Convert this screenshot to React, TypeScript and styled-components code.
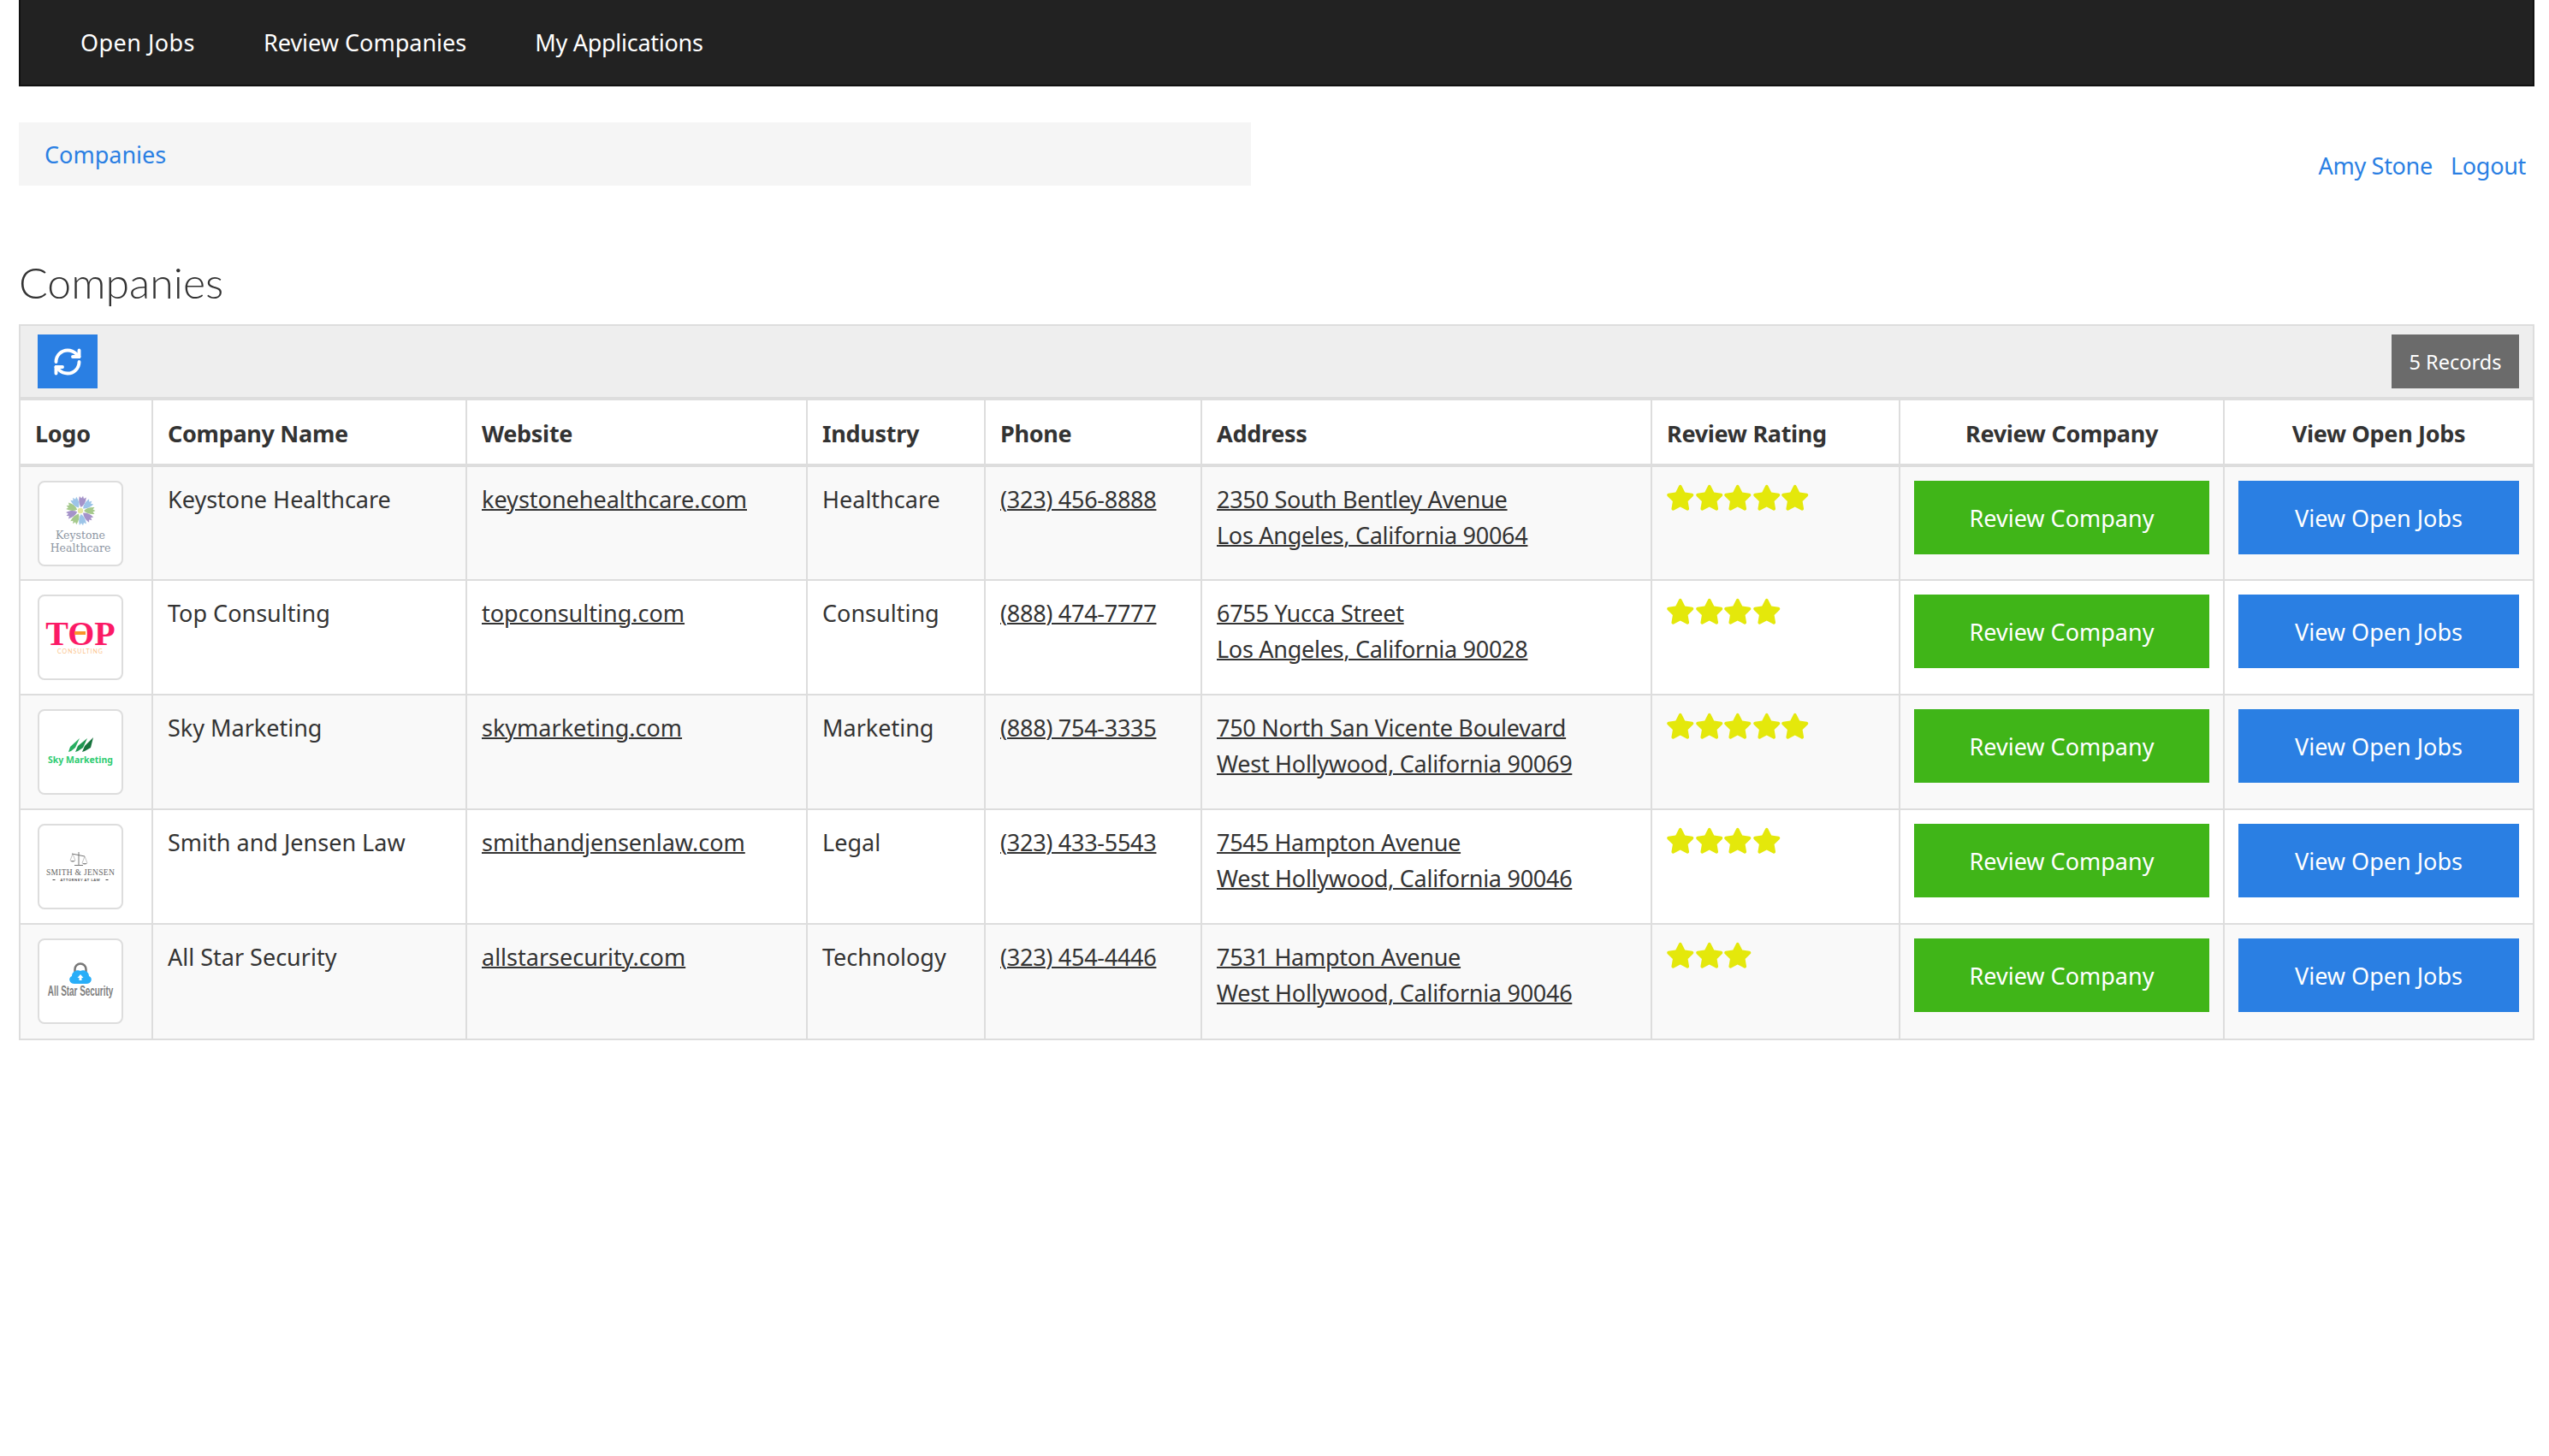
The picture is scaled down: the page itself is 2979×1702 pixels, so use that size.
import * as React from 'react'
import styled, { createGlobalStyle } from 'styled-components'
import { FaStar } from 'react-icons/fa'
import { RefreshCw } from 'lucide-react'

const GlobalStyle = createGlobalStyle`
  html, body {
    margin: 0;
    background: #fff;
    color: #333;
    font-family: "Noto Sans", "Lato", sans-serif;
    font-size: 27px;
    line-height: 42px;
  }
`

type Company = {
  name: string
  logo: React.ReactNode
  website: string
  industry: string
  phone: string
  street: string
  city: string
  rating: number
}

const KeystoneLogo = () => {
  const petals = [
    [10, '#a593c9'], [50, '#9cc4e8'], [90, '#a5c98c'], [130, '#a593c9'], [170, '#9cc4e8'],
    [210, '#a5c98c'], [250, '#a593c9'], [290, '#a5c98c'], [330, '#9cc4e8'],
  ] as const
  return (
    <svg width="96" height="96" viewBox="0 0 96 96">
      {petals.map(([a, c]) => (
        <path key={a} d="M48 29 C45 26 43.500 22 44 16.500 L46.500 18.500 L48 15.500 L49.500 18.500 L52 16.500 C52.500 22 51 26 48 29 Z" fill={c} transform={`rotate(${a} 48 33)`} />
      ))}
      <circle cx="48" cy="33" r="3.200" fill="#e6e8a0" />
      <text x="48" y="66" textAnchor="middle" fontFamily="DejaVu Serif, serif" fontSize="12.500" fill="#8d96a3">Keystone</text>
      <text x="48" y="81" textAnchor="middle" fontFamily="DejaVu Serif, serif" fontSize="12.500" fill="#8d96a3">Healthcare</text>
    </svg>
  )
}

const TopLogo = () => (
  <svg width="96" height="96" viewBox="0 0 96 96">
    <text x="48" y="57" textAnchor="middle" fontFamily="Liberation Serif, serif" fontWeight="700" fontSize="40" fill="#fb1a66">TOP</text>
    <rect x="41" y="41" width="13" height="4" fill="#f9962a" />
    <text x="48" y="67" textAnchor="middle" fontFamily="Lato, sans-serif" fontSize="7" letterSpacing="1" fill="#fcc58c">CONSULTING</text>
  </svg>
)

const SkyLogo = () => (
  <svg width="96" height="96" viewBox="0 0 96 96">
    <path d="M34 48 L36 42 L47 32 L42 43 L37 47 Z" fill="#27ae60" />
    <path d="M42 48 L45 41 L56 32 L51 43 L45 47 Z" fill="#1e9650" />
    <path d="M50 48 L53 41 L63 31 L60 43 L53 47 Z" fill="#17733d" />
    <text x="48" y="61" textAnchor="middle" fontFamily="Noto Sans, sans-serif" fontWeight="700" fontSize="10.500" fill="#2ecc71">Sky Marketing</text>
  </svg>
)

const SmithLogo = () => (
  <svg width="96" height="96" viewBox="0 0 96 96" fill="none">
    <path d="M46 31 L46 46 M41 46.500 L51 46.500 M38 33 L53 36" stroke="#777" strokeWidth="1" />
    <path d="M36 41 L39 33 L42 41 M50 44 L53 36 L56 44" stroke="#999" strokeWidth="0.600" />
    <path d="M36 41 Q39 44 42 41 Z M50 44 Q53 47 56 44 Z" fill="#888" />
    <text x="48" y="58" textAnchor="middle" fontFamily="Liberation Serif, serif" fontSize="9.500" letterSpacing="0.300" fill="#666">SMITH &amp; JENSEN</text>
    <text x="48" y="65" textAnchor="middle" fontFamily="Lato, sans-serif" fontWeight="700" fontSize="4" letterSpacing="0.700" fill="#444">ATTORNEY AT LAW</text>
    <path d="M15.500 63.500 L18.500 63.500 M77.500 63.500 L80.500 63.500" stroke="#444" strokeWidth="1" />
  </svg>
)

const StarLogo = () => (
  <svg width="96" height="96" viewBox="0 0 96 96">
    <path d="M41.500 38 L41.500 34 A6.500 6.500 0 0 1 54.500 34 L54.500 38" fill="none" stroke="#777" strokeWidth="2.500" />
    <path d="M41 51 C35 51 33 44 38 42 C38 36 45 34 48 36 C51 34 58 36 58 42 C63 44 61 51 55 51 Z" fill="#29aef8" />
    <path d="M48 40 L51.500 44 L49.500 44 L49.500 47 L46.500 47 L46.500 44 L44.500 44 Z" fill="#fff" />
    <text transform="translate(48 65) scale(0.62 1)" textAnchor="middle" fontFamily="Liberation Sans, sans-serif" fontWeight="700" fontSize="16" fill="#808080">All Star Security</text>
  </svg>
)

const companies: Company[] = [
  { name: 'Keystone Healthcare', logo: <KeystoneLogo />, website: 'keystonehealthcare.com', industry: 'Healthcare', phone: '(323) 456-8888', street: '2350 South Bentley Avenue', city: 'Los Angeles, California 90064', rating: 5 },
  { name: 'Top Consulting', logo: <TopLogo />, website: 'topconsulting.com', industry: 'Consulting', phone: '(888) 474-7777', street: '6755 Yucca Street', city: 'Los Angeles, California 90028', rating: 4 },
  { name: 'Sky Marketing', logo: <SkyLogo />, website: 'skymarketing.com', industry: 'Marketing', phone: '(888) 754-3335', street: '750 North San Vicente Boulevard', city: 'West Hollywood, California 90069', rating: 5 },
  { name: 'Smith and Jensen Law', logo: <SmithLogo />, website: 'smithandjensenlaw.com', industry: 'Legal', phone: '(323) 433-5543', street: '7545 Hampton Avenue', city: 'West Hollywood, California 90046', rating: 4 },
  { name: 'All Star Security', logo: <StarLogo />, website: 'allstarsecurity.com', industry: 'Technology', phone: '(323) 454-4446', street: '7531 Hampton Avenue', city: 'West Hollywood, California 90046', rating: 3 },
]

const columns = [
  { label: 'Logo', width: 154 },
  { label: 'Company Name', width: 367 },
  { label: 'Website', width: 398 },
  { label: 'Industry', width: 208 },
  { label: 'Phone', width: 253 },
  { label: 'Address', width: 526 },
  { label: 'Review Rating', width: 290 },
  { label: 'Review Company', width: 379, center: true },
  { label: 'View Open Jobs', width: 361, center: true },
]

export default function App() {
  return (
    <Page>
      <GlobalStyle />
      <NavBar>
        <NavLink href="#">Open Jobs</NavLink>
        <NavLink href="#">Review Companies</NavLink>
        <NavLink href="#">My Applications</NavLink>
      </NavBar>
      <TopRow>
        <Breadcrumb><BlueLink href="#">Companies</BlueLink></Breadcrumb>
        <UserLinks>
          <BlueLink href="#">Amy Stone</BlueLink>
          <BlueLink href="#">Logout</BlueLink>
        </UserLinks>
      </TopRow>
      <Heading>Companies</Heading>
      <Panel>
        <Toolbar>
          <RefreshButton aria-label="Refresh"><RefreshCw size={36} strokeWidth={2.6} /></RefreshButton>
          <RecordCount>5 Records</RecordCount>
        </Toolbar>
        <Table>
          <colgroup>
            {columns.map(c => <col key={c.label} style={{ width: c.width }} />)}
          </colgroup>
          <thead>
            <tr>
              {columns.map(c => <HeadCell key={c.label} $center={c.center}>{c.label}</HeadCell>)}
            </tr>
          </thead>
          <tbody>
            {companies.map(c => (
              <Row key={c.name}>
                <Cell><LogoBox>{c.logo}</LogoBox></Cell>
                <Cell>{c.name}</Cell>
                <Cell><DarkLink href="#">{c.website}</DarkLink></Cell>
                <Cell>{c.industry}</Cell>
                <Cell><NumberLink href="#">{c.phone}</NumberLink></Cell>
                <Cell>
                  <NumberLink href="#">{c.street}</NumberLink><br />
                  <NumberLink href="#">{c.city}</NumberLink>
                </Cell>
                <Cell>
                  <Stars>
                    {Array.from({ length: c.rating }, (_, i) => <FaStar key={i} size={33.5} />)}
                  </Stars>
                </Cell>
                <ButtonCell><ActionButton $color="#40b518">Review Company</ActionButton></ButtonCell>
                <ButtonCell><ActionButton $color="#2a7fe3">View Open Jobs</ActionButton></ButtonCell>
              </Row>
            ))}
          </tbody>
        </Table>
      </Panel>
    </Page>
  )
}

const Page = styled.div`
  padding: 0 17px 0 22px;
  min-height: 1702px;
  box-sizing: border-box;
`

const NavBar = styled.nav`
  display: flex;
  height: 101px;
  box-sizing: border-box;
  padding: 0 30px;
  align-items: center;
  background: #222;
  border: 2px solid #111;
  border-top: 0;
`

const NavLink = styled.a`
  padding: 0 40px;
  color: #fff;
  text-decoration: none;
  &:first-child { letter-spacing: 0.45px; }
  &:last-child { letter-spacing: -0.27px; }
`

const TopRow = styled.div`
  display: flex;
  justify-content: space-between;
  align-items: flex-end;
  margin-top: 42px;
`

const Breadcrumb = styled.div`
  width: 1440px;
  height: 74px;
  box-sizing: border-box;
  padding: 17px 30px;
  background: #f5f5f5;
`

const BlueLink = styled.a`
  color: #2a7fe3;
  text-decoration: none;
`

const UserLinks = styled.div`
  display: flex;
  gap: 21px;
  padding-right: 10px;
  margin-bottom: 2px;
  letter-spacing: -0.3px;
`

const Heading = styled.h1`
  margin: 78px 0 0;
  font-family: "Lato", sans-serif;
  font-size: 50px;
  line-height: 70px;
  font-weight: 300;
  color: #333;
`

const Panel = styled.div`
  margin-top: 14px;
  border: 2px solid #ddd;
`

const Toolbar = styled.div`
  display: flex;
  justify-content: space-between;
  align-items: center;
  height: 83px;
  box-sizing: border-box;
  padding: 0 16px 0 20px;
  background: #eee;
`

const RefreshButton = styled.button`
  display: flex;
  justify-content: center;
  align-items: center;
  width: 70px;
  height: 63px;
  padding: 0;
  border: 0;
  background: #2a7fe3;
  color: #fff;
`

const RecordCount = styled.span`
  display: flex;
  justify-content: center;
  align-items: center;
  width: 149px;
  height: 63px;
  background: #6b6b6b;
  color: #fff;
  font-size: 23.5px;
`

const Table = styled.table`
  width: 100%;
  table-layout: fixed;
  border-collapse: collapse;
`

const HeadCell = styled.th<{ $center?: boolean }>`
  height: 78px;
  box-sizing: border-box;
  padding: 3px 17px 0;
  text-align: ${p => (p.$center ? 'center' : 'left')};
  font-weight: 700;
  letter-spacing: -0.3px;
  color: #333;
  background: #fff;
  border-top: 4px solid #ddd;
  border-bottom: 4px solid #ddd;
  border-left: 2px solid #ddd;
  &:first-child { border-left: 0; }
`

const Row = styled.tr`
  &:nth-child(odd) { background: #f9f9f9; }
  &:nth-child(even) { background: #fff; }
`

const Cell = styled.td`
  height: 134px;
  box-sizing: border-box;
  padding: 17px 17px 0;
  vertical-align: top;
  border-top: 2px solid #ddd;
  border-left: 2px solid #ddd;
  &:first-child { border-left: 0; }
  tr:first-child > & { border-top: 0; }
`

const ButtonCell = styled(Cell)`
  padding: 16px 16px 0;
  text-align: center;
`

const LogoBox = styled.div`
  display: flex;
  width: 100px;
  height: 100px;
  box-sizing: border-box;
  justify-content: center;
  align-items: center;
  margin: -1px 0 0 3px;
  background: #fff;
  border: 2px solid #ddd;
  border-radius: 8px;
`

const DarkLink = styled.a`
  color: #333;
  text-decoration: underline;
  text-decoration-thickness: 2px;
`

const NumberLink = styled(DarkLink)`
  letter-spacing: -0.28px;
`

const Stars = styled.div`
  display: flex;
  color: #e4e80b;
  margin: 2px 0 0 -1px;
  height: 34px;
`

const ActionButton = styled.button<{ $color: string }>`
  display: block;
  width: 100%;
  height: 86px;
  padding: 2px 0 0;
  border: 0;
  background: ${p => p.$color};
  color: #fff;
  font: inherit;
`
